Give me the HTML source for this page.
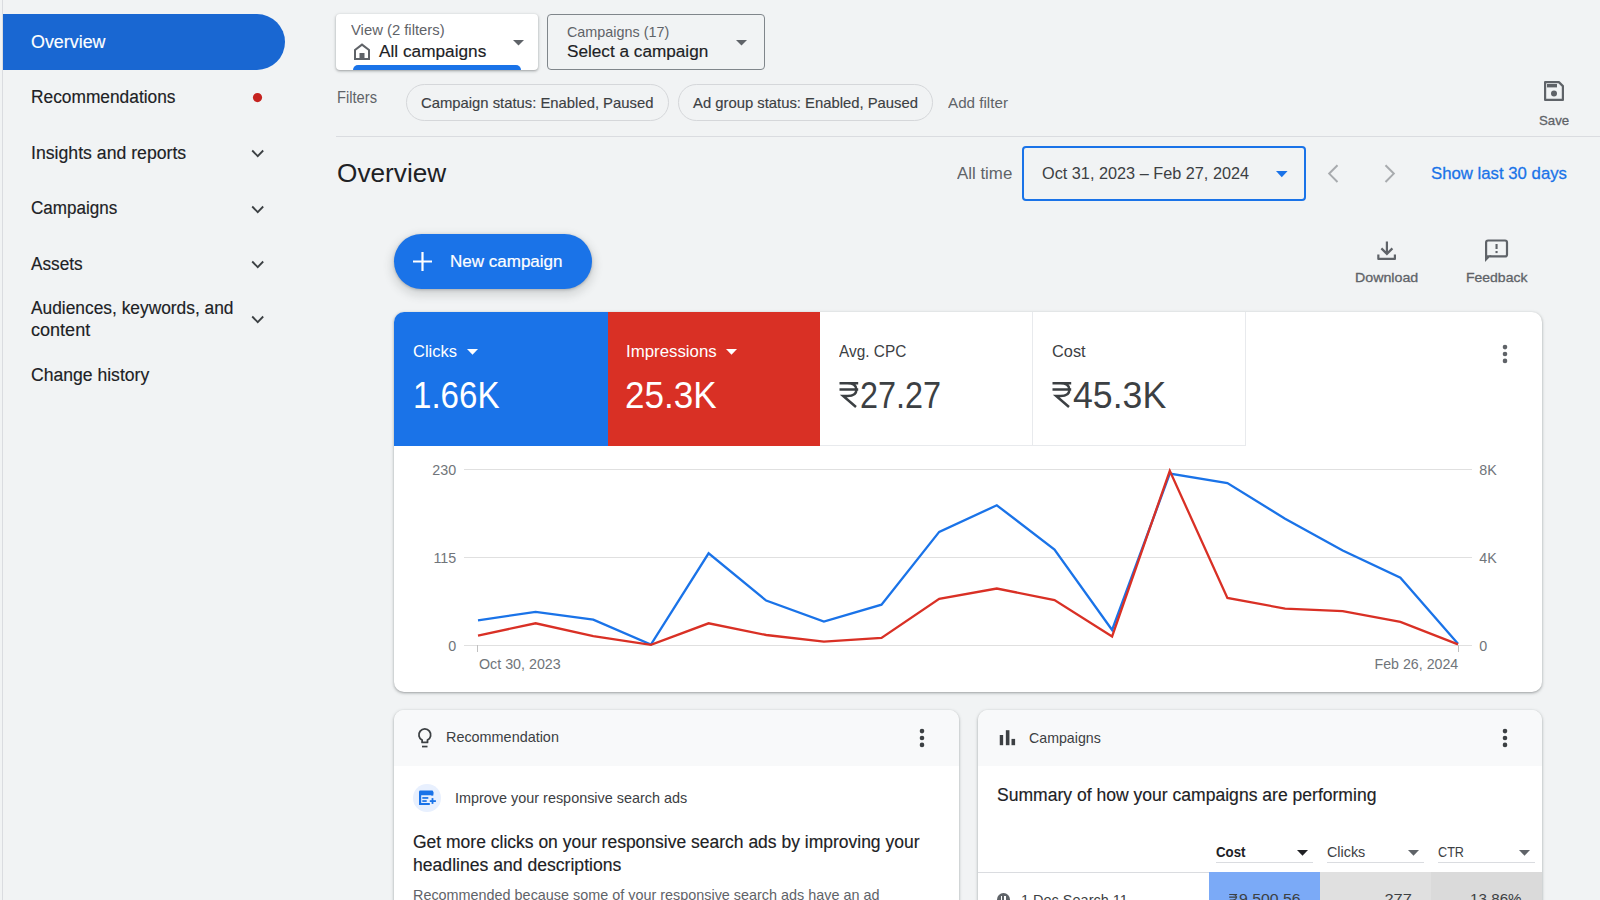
<!DOCTYPE html>
<html><head><meta charset="utf-8"><style>
html,body{margin:0;padding:0;width:1600px;height:900px;overflow:hidden;background:#f1f3f4;font-family:"Liberation Sans",sans-serif;position:relative}
.t{position:absolute;line-height:1;white-space:nowrap}
</style></head><body>
<div style="position:absolute;left:2px;top:0px;width:1px;height:900px;background:#dadce0"></div>
<div style="position:absolute;left:3px;top:14px;width:282px;height:56px;background:#1967d2;border-radius:0 28px 28px 0"></div>
<div class="t" style="left:30.80px;top:34.00px;font-size:17.6px;color:#fff;font-weight:400;-webkit-text-stroke:0.15px currentColor;;transform:scaleX(1.0160);transform-origin:left center;">Overview</div>
<div class="t" style="left:30.80px;top:89.00px;font-size:17.6px;color:#202124;font-weight:400;-webkit-text-stroke:0.15px currentColor;;transform:scaleX(0.9851);transform-origin:left center;">Recommendations</div>
<svg style="position:absolute;left:252px;top:92px;overflow:visible" width="11" height="11" viewBox="0 0 11 11"><circle cx="5.5" cy="5.6" r="4.6" fill="#c5221f"/></svg>
<div class="t" style="left:30.80px;top:145.00px;font-size:17.6px;color:#202124;font-weight:400;-webkit-text-stroke:0.15px currentColor;;transform:scaleX(1.0043);transform-origin:left center;">Insights and reports</div>
<svg style="position:absolute;left:250.7px;top:149.0px;overflow:visible" width="14" height="9" viewBox="0 0 14 9"><path d="M1.2 1.5 L6.7 7.1 L12.2 1.5" fill="none" stroke="#3c4043" stroke-width="1.8"/></svg>
<div class="t" style="left:30.80px;top:200.00px;font-size:17.6px;color:#202124;font-weight:400;-webkit-text-stroke:0.15px currentColor;;transform:scaleX(0.9685);transform-origin:left center;">Campaigns</div>
<svg style="position:absolute;left:250.7px;top:204.6px;overflow:visible" width="14" height="9" viewBox="0 0 14 9"><path d="M1.2 1.5 L6.7 7.1 L12.2 1.5" fill="none" stroke="#3c4043" stroke-width="1.8"/></svg>
<div class="t" style="left:30.80px;top:256.00px;font-size:17.6px;color:#202124;font-weight:400;-webkit-text-stroke:0.15px currentColor;;transform:scaleX(0.9789);transform-origin:left center;">Assets</div>
<svg style="position:absolute;left:250.7px;top:259.9px;overflow:visible" width="14" height="9" viewBox="0 0 14 9"><path d="M1.2 1.5 L6.7 7.1 L12.2 1.5" fill="none" stroke="#3c4043" stroke-width="1.8"/></svg>
<div class="t" style="left:30.80px;top:300.00px;font-size:17.6px;color:#202124;font-weight:400;-webkit-text-stroke:0.15px currentColor;;transform:scaleX(0.9859);transform-origin:left center;">Audiences, keywords, and</div>
<div class="t" style="left:30.80px;top:322.00px;font-size:17.6px;color:#202124;font-weight:400;-webkit-text-stroke:0.15px currentColor;;transform:scaleX(1.0257);transform-origin:left center;">content</div>
<svg style="position:absolute;left:250.7px;top:315.2px;overflow:visible" width="14" height="9" viewBox="0 0 14 9"><path d="M1.2 1.5 L6.7 7.1 L12.2 1.5" fill="none" stroke="#3c4043" stroke-width="1.8"/></svg>
<div class="t" style="left:30.80px;top:367.00px;font-size:17.6px;color:#202124;font-weight:400;-webkit-text-stroke:0.15px currentColor;;transform:scaleX(0.9988);transform-origin:left center;">Change history</div>
<div style="position:absolute;left:336px;top:14px;width:202px;height:56px;background:#fff;border-radius:4px;box-shadow:0 1px 2px rgba(60,64,67,.3),0 1px 3px 1px rgba(60,64,67,.15)"></div>
<div class="t" style="left:350.60px;top:23.00px;font-size:14.2px;color:#5f6368;font-weight:400;;transform:scaleX(1.0444);transform-origin:left center;">View (2 filters)</div>
<svg style="position:absolute;left:353px;top:43px;overflow:visible" width="18" height="17" viewBox="0 0 18 17"><path d="M2 16 V7 L9 1.6 L16 7 V16 Z" fill="none" stroke="#5f6368" stroke-width="2" stroke-linejoin="miter"/><rect x="6.5" y="10" width="5" height="6" fill="#5f6368"/></svg>
<div class="t" style="left:378.80px;top:43.00px;font-size:17.1px;color:#202124;font-weight:400;-webkit-text-stroke:0.15px currentColor;;transform:scaleX(1.0083);transform-origin:left center;">All campaigns</div>
<svg style="position:absolute;left:513px;top:40px;overflow:visible" width="11" height="6" viewBox="0 0 11 6"><path d="M0 0 H11 L5.5 5.6 Z" fill="#5f6368"/></svg>
<div style="position:absolute;left:352.7px;top:65px;width:168.5px;height:5px;background:#1a73e8;border-radius:5px 5px 0 0"></div>
<div style="position:absolute;left:547px;top:14px;width:218px;height:56px;box-sizing:border-box;border:1px solid #80868b;border-radius:4px"></div>
<div class="t" style="left:566.70px;top:25.00px;font-size:14.2px;color:#5f6368;font-weight:400;;transform:scaleX(1.0125);transform-origin:left center;">Campaigns (17)</div>
<div class="t" style="left:566.70px;top:44.00px;font-size:16.8px;color:#202124;font-weight:400;-webkit-text-stroke:0.15px currentColor;;transform:scaleX(1.0234);transform-origin:left center;">Select a campaign</div>
<svg style="position:absolute;left:735.7px;top:40px;overflow:visible" width="11" height="6" viewBox="0 0 11 6"><path d="M0 0 H11 L5.5 5.6 Z" fill="#5f6368"/></svg>
<div class="t" style="left:337.00px;top:90.00px;font-size:15.8px;color:#5f6368;font-weight:400;;transform:scaleX(0.9299);transform-origin:left center;">Filters</div>
<div style="position:absolute;left:406px;top:84px;width:262.6px;height:36.6px;box-sizing:border-box;border:1px solid #d5d7da;border-radius:18.3px"></div>
<div class="t" style="left:420.80px;top:95.00px;font-size:15px;color:#3c4043;font-weight:400;-webkit-text-stroke:0.15px #3c4043;transform:scaleX(0.9883);transform-origin:left center;">Campaign status: Enabled, Paused</div>
<div style="position:absolute;left:678.3px;top:84px;width:255px;height:36.6px;box-sizing:border-box;border:1px solid #d5d7da;border-radius:18.3px"></div>
<div class="t" style="left:693.40px;top:95.00px;font-size:15px;color:#3c4043;font-weight:400;-webkit-text-stroke:0.15px #3c4043;transform:scaleX(0.9883);transform-origin:left center;">Ad group status: Enabled, Paused</div>
<div class="t" style="left:948.00px;top:95.00px;font-size:15.5px;color:#5f6368;font-weight:400;;transform:scaleX(0.9808);transform-origin:left center;">Add filter</div>
<svg style="position:absolute;left:1542px;top:79px;overflow:visible" width="24" height="24" viewBox="0 0 24 24"><path d="M3.1 3.1 H16.9 L20.9 7.1 V20.9 H3.1 Z" fill="none" stroke="#5f6368" stroke-width="2.2" stroke-linejoin="round"/><rect x="5" y="5" width="10" height="3.4" fill="#5f6368"/><circle cx="12" cy="14.5" r="3" fill="#5f6368"/></svg>
<div class="t" style="left:1538.50px;top:114.00px;font-size:13.6px;color:#5f6368;font-weight:400;-webkit-text-stroke:0.3px #5f6368;transform:scaleX(0.9747);transform-origin:left center;">Save</div>
<div style="position:absolute;left:336px;top:135.5px;width:1264px;height:1px;background:#dadce0"></div>
<div class="t" style="left:337.00px;top:160.00px;font-size:26.6px;color:#202124;font-weight:400;;transform:scaleX(0.9852);transform-origin:left center;">Overview</div>
<div class="t" style="left:956.60px;top:166.00px;font-size:16.9px;color:#5f6368;font-weight:400;;transform:scaleX(0.9986);transform-origin:left center;">All time</div>
<div style="position:absolute;left:1022.4px;top:146.4px;width:283.5px;height:54.3px;box-sizing:border-box;border:2px solid #1a73e8;border-radius:4px"></div>
<div class="t" style="left:1041.70px;top:166.00px;font-size:16.6px;color:#3c4043;font-weight:400;;transform:scaleX(0.9803);transform-origin:left center;">Oct 31, 2023 – Feb 27, 2024</div>
<svg style="position:absolute;left:1275.9px;top:170.8px;overflow:visible" width="11.6" height="6.4" viewBox="0 0 11.6 6.4"><path d="M0 0 H11.6 L5.8 6.2 Z" fill="#1a73e8"/></svg>
<svg style="position:absolute;left:1326px;top:164px;overflow:visible" width="14" height="20" viewBox="0 0 14 20"><path d="M11.5 1.2 L3.2 9.6 L11.5 18" fill="none" stroke="#a8abae" stroke-width="2"/></svg>
<svg style="position:absolute;left:1383px;top:164px;overflow:visible" width="14" height="20" viewBox="0 0 14 20"><path d="M2.5 1.2 L10.8 9.6 L2.5 18" fill="none" stroke="#a8abae" stroke-width="2"/></svg>
<div class="t" style="left:1431.00px;top:165.00px;font-size:17.2px;color:#1a73e8;font-weight:400;-webkit-text-stroke:0.3px #1a73e8;transform:scaleX(0.9749);transform-origin:left center;">Show last 30 days</div>
<div style="position:absolute;left:394.4px;top:233.8px;width:197.6px;height:55.4px;background:#1a73e8;border-radius:28px;box-shadow:0 1px 3px rgba(60,64,67,.3),0 4px 8px 3px rgba(60,64,67,.15)"></div>
<svg style="position:absolute;left:413px;top:252px;overflow:visible" width="19" height="19" viewBox="0 0 19 19"><path d="M9.5 0 V19 M0 9.5 H19" stroke="#fff" stroke-width="2.2"/></svg>
<div class="t" style="left:449.80px;top:254.00px;font-size:16.8px;color:#fff;font-weight:400;-webkit-text-stroke:0.2px #fff;transform:scaleX(1.0135);transform-origin:left center;">New campaign</div>
<svg style="position:absolute;left:1375px;top:240px;overflow:visible" width="24" height="22" viewBox="0 0 24 22"><path d="M11.9 1.5 V13.5 M6.4 8.4 L11.9 13.9 L17.4 8.4" fill="none" stroke="#5f6368" stroke-width="2.2"/><path d="M3.35 14.4 V18.9 H19.9 V14.4" fill="none" stroke="#5f6368" stroke-width="2.2" stroke-linejoin="round"/></svg>
<div class="t" style="left:1354.80px;top:271.00px;font-size:13.3px;color:#5f6368;font-weight:400;-webkit-text-stroke:0.3px #5f6368;transform:scaleX(1.0686);transform-origin:left center;">Download</div>
<svg style="position:absolute;left:1484px;top:238px;overflow:visible" width="26" height="26" viewBox="0 0 26 26"><path d="M2.1 18.4 V4.5 Q2.1 2.5 4.1 2.5 H21 Q23 2.5 23 4.5 V16.4 Q23 18.4 21 18.4 H5.5" fill="none" stroke="#5f6368" stroke-width="2.2" stroke-linejoin="round"/><path d="M1 17.3 H7.5 L1 23.9 Z" fill="#5f6368"/><rect x="11.5" y="6" width="2.1" height="5" fill="#5f6368"/><rect x="11.5" y="13" width="2.1" height="2.1" fill="#5f6368"/></svg>
<div class="t" style="left:1465.60px;top:271.00px;font-size:13.3px;color:#5f6368;font-weight:400;-webkit-text-stroke:0.3px #5f6368;transform:scaleX(1.0513);transform-origin:left center;">Feedback</div>
<div style="position:absolute;left:394.3px;top:312px;width:1147.7px;height:379.6px;background:#fff;border-radius:10px;box-shadow:0 1px 2px rgba(60,64,67,.3),0 1px 3px 1px rgba(60,64,67,.15)"></div>
<div style="position:absolute;left:394.3px;top:312px;width:213.4px;height:133.8px;background:#1a73e8;border-radius:10px 0 0 0"></div>
<div style="position:absolute;left:607.5px;top:312px;width:212.5px;height:133.8px;background:#d93025"></div>
<div style="position:absolute;left:820px;top:445px;width:425.5px;height:1px;background:#e8eaed"></div>
<div style="position:absolute;left:1032px;top:312px;width:1px;height:134px;background:#e8eaed"></div>
<div style="position:absolute;left:1245px;top:312px;width:1px;height:134px;background:#e8eaed"></div>
<div class="t" style="left:413.40px;top:343.00px;font-size:17px;color:#fff;font-weight:400;;transform:scaleX(0.9704);transform-origin:left center;">Clicks</div>
<svg style="position:absolute;left:466.5px;top:349px;overflow:visible" width="11" height="6" viewBox="0 0 11 6"><path d="M0 0 H11 L5.5 5.8 Z" fill="#fff"/></svg>
<div class="t" style="left:626.00px;top:343.00px;font-size:17px;color:#fff;font-weight:400;;transform:scaleX(0.9897);transform-origin:left center;">Impressions</div>
<svg style="position:absolute;left:725.5px;top:349px;overflow:visible" width="11" height="6" viewBox="0 0 11 6"><path d="M0 0 H11 L5.5 5.8 Z" fill="#fff"/></svg>
<div class="t" style="left:838.70px;top:343.00px;font-size:16.2px;color:#3c4043;font-weight:400;;transform:scaleX(0.9508);transform-origin:left center;">Avg. CPC</div>
<div class="t" style="left:1051.80px;top:343.00px;font-size:16.2px;color:#3c4043;font-weight:400;;transform:scaleX(1.0091);transform-origin:left center;">Cost</div>
<div class="t" style="left:412.60px;top:377.00px;font-size:37px;color:#fff;font-weight:400;;transform:scaleX(0.8945);transform-origin:left center;">1.66K</div>
<div class="t" style="left:625.20px;top:377.00px;font-size:37px;color:#fff;font-weight:400;;transform:scaleX(0.9462);transform-origin:left center;">25.3K</div>
<svg style="position:absolute;left:839.3px;top:382.0px;overflow:visible" width="20.0" height="25.6" viewBox="0 0 20 25.6"><path d="M0.5 1.3 H19.2 M0.5 7.4 H19.2 M8.5 1.3 Q17.4 1.3 17.4 7.7 Q17.4 14 8.5 14 H4.2 L17 25" fill="none" stroke="#3c4043" stroke-width="2.5"/></svg>
<div class="t" style="left:860.20px;top:377.00px;font-size:37px;color:#3c4043;font-weight:400;;transform:scaleX(0.8748);transform-origin:left center;">27.27</div>
<svg style="position:absolute;left:1051.8px;top:382.0px;overflow:visible" width="20.0" height="25.6" viewBox="0 0 20 25.6"><path d="M0.5 1.3 H19.2 M0.5 7.4 H19.2 M8.5 1.3 Q17.4 1.3 17.4 7.7 Q17.4 14 8.5 14 H4.2 L17 25" fill="none" stroke="#3c4043" stroke-width="2.5"/></svg>
<div class="t" style="left:1073.00px;top:377.00px;font-size:37px;color:#3c4043;font-weight:400;;transform:scaleX(0.9638);transform-origin:left center;">45.3K</div>
<svg style="position:absolute;left:1499.75px;top:341.85px;overflow:visible" width="10" height="24" viewBox="0 0 10 24"><circle cx="5" cy="5.1" r="2.3" fill="#5f6368"/><circle cx="5" cy="12" r="2.3" fill="#5f6368"/><circle cx="5" cy="18.9" r="2.3" fill="#5f6368"/></svg>
<div style="position:absolute;left:464px;top:468.5px;width:1008px;height:1px;background:#e0e0e0"></div>
<div style="position:absolute;left:464px;top:556.5px;width:1008px;height:1px;background:#e0e0e0"></div>
<div style="position:absolute;left:464px;top:644.5px;width:1008px;height:1px;background:#e0e0e0"></div>
<div class="t" style="right:1143.80px;top:463.00px;font-size:14.3px;color:#70757a;font-weight:400;;">230</div>
<div class="t" style="right:1143.80px;top:551.00px;font-size:14.3px;color:#70757a;font-weight:400;;">115</div>
<div class="t" style="right:1143.80px;top:639.00px;font-size:14.3px;color:#70757a;font-weight:400;;">0</div>
<div class="t" style="left:1479.20px;top:463.00px;font-size:14.3px;color:#70757a;font-weight:400;;">8K</div>
<div class="t" style="left:1479.20px;top:551.00px;font-size:14.3px;color:#70757a;font-weight:400;;">4K</div>
<div class="t" style="left:1479.20px;top:639.00px;font-size:14.3px;color:#70757a;font-weight:400;;">0</div>
<div style="position:absolute;left:477.2px;top:645px;width:1px;height:6.5px;background:#c0c0c0"></div>
<div style="position:absolute;left:1458px;top:645px;width:1px;height:6.5px;background:#c0c0c0"></div>
<div class="t" style="left:478.50px;top:657.00px;font-size:14.3px;color:#70757a;font-weight:400;;transform:scaleX(0.9979);transform-origin:left center;">Oct 30, 2023</div>
<div class="t" style="right:142.00px;top:657.00px;font-size:14.3px;color:#70757a;font-weight:400;;transform:scaleX(0.9945);transform-origin:right center;">Feb 26, 2024</div>
<svg style="position:absolute;left:0px;top:0px;overflow:visible" width="1600" height="900" viewBox="0 0 1600 900"><polyline points="478.0,620.4 535.6,611.8 593.3,619.6 650.9,644.5 708.6,553.3 766.2,600.6 823.9,621.6 881.5,604.7 939.2,531.9 996.8,505.3 1054.5,549.5 1112.1,630.0 1169.8,473.6 1227.4,483.1 1285.1,518.7 1342.7,550.5 1400.4,577.8 1458.0,643.8" fill="none" stroke="#1a73e8" stroke-width="2.3" stroke-linejoin="miter"/><polyline points="478.0,635.6 535.6,623.3 593.3,636.1 650.9,644.9 708.6,623.3 766.2,635.0 823.9,641.6 881.5,637.9 939.2,598.9 996.8,588.5 1054.5,600.0 1112.1,636.5 1169.8,470.8 1227.4,597.9 1285.1,608.6 1342.7,611.1 1400.4,621.9 1458.0,644.4" fill="none" stroke="#d93025" stroke-width="2.3" stroke-linejoin="miter"/></svg>
<div style="position:absolute;left:394.3px;top:709.8px;width:564.6px;height:260px;background:#fff;border-radius:10px;overflow:hidden;box-shadow:0 1px 2px rgba(60,64,67,.3),0 1px 3px 1px rgba(60,64,67,.15)"></div>
<div style="position:absolute;left:394.3px;top:709.8px;width:564.6px;height:56px;background:#f8f9fa;border-radius:10px 10px 0 0"></div>
<div style="position:absolute;left:977.8px;top:709.8px;width:564.2px;height:260px;background:#fff;border-radius:10px;overflow:hidden;box-shadow:0 1px 2px rgba(60,64,67,.3),0 1px 3px 1px rgba(60,64,67,.15)"></div>
<div style="position:absolute;left:977.8px;top:709.8px;width:564.2px;height:56px;background:#f8f9fa;border-radius:10px 10px 0 0"></div>
<svg style="position:absolute;left:410px;top:722px;overflow:visible" width="30" height="30" viewBox="0 0 30 30"><path d="M12.1 18.1 A5.9 5.9 0 1 1 17.5 18.1 V20.4 H12.1 Z" fill="none" stroke="#3c4043" stroke-width="1.8" stroke-linejoin="round"/><rect x="12" y="23.7" width="5.5" height="1.7" fill="#3c4043"/></svg>
<div class="t" style="left:446.00px;top:730.00px;font-size:14.4px;color:#3c4043;font-weight:400;;transform:scaleX(1.0009);transform-origin:left center;">Recommendation</div>
<svg style="position:absolute;left:917px;top:725.8px;overflow:visible" width="10" height="24" viewBox="0 0 10 24"><circle cx="5" cy="5.1" r="2.3" fill="#3c4043"/><circle cx="5" cy="12" r="2.3" fill="#3c4043"/><circle cx="5" cy="18.9" r="2.3" fill="#3c4043"/></svg>
<div style="position:absolute;left:413.2px;top:784.3px;width:27.6px;height:27.6px;background:#e8f0fe;border-radius:50%"></div>
<svg style="position:absolute;left:413px;top:783px;overflow:visible" width="30" height="30" viewBox="0 0 30 30"><rect x="6" y="7.5" width="14.3" height="4.8" rx="1.4" fill="#1a73e8"/><rect x="6" y="9" width="2.2" height="13" fill="#1a73e8"/><path d="M6 19.9 H16.8 V21.9 H8 Q6 21.9 6 19.9 Z" fill="#1a73e8"/><rect x="18.3" y="9" width="2" height="3.6" fill="#1a73e8"/><rect x="9.3" y="14.1" width="6" height="1.7" fill="#1a73e8"/><rect x="9.3" y="17.2" width="4.4" height="1.7" fill="#1a73e8"/><rect x="16.8" y="17.2" width="6.1" height="1.8" fill="#1a73e8"/><rect x="18.6" y="15.1" width="1.8" height="5.8" fill="#1a73e8"/></svg>
<div class="t" style="left:454.90px;top:791.00px;font-size:14.6px;color:#3c4043;font-weight:400;;transform:scaleX(0.9875);transform-origin:left center;">Improve your responsive search ads</div>
<div class="t" style="left:413.30px;top:834.00px;font-size:17.5px;color:#202124;font-weight:400;-webkit-text-stroke:0.15px currentColor;;transform:scaleX(0.9995);transform-origin:left center;">Get more clicks on your responsive search ads by improving your</div>
<div class="t" style="left:413.30px;top:857.00px;font-size:17.5px;color:#202124;font-weight:400;-webkit-text-stroke:0.15px currentColor;;transform:scaleX(1.0051);transform-origin:left center;">headlines and descriptions</div>
<div class="t" style="left:413.00px;top:888.00px;font-size:14.6px;color:#5f6368;font-weight:400;;transform:scaleX(0.9864);transform-origin:left center;">Recommended because some of your responsive search ads have an ad</div>
<svg style="position:absolute;left:999px;top:730px;overflow:visible" width="17" height="16" viewBox="0 0 17 16"><rect x="0.75" y="5" width="3.4" height="10.2" fill="#3c4043"/><rect x="6.85" y="0.2" width="3.6" height="15" fill="#3c4043"/><rect x="12.5" y="8.9" width="3.6" height="6.3" fill="#3c4043"/></svg>
<div class="t" style="left:1028.80px;top:731.00px;font-size:14.4px;color:#3c4043;font-weight:400;;transform:scaleX(0.9863);transform-origin:left center;">Campaigns</div>
<svg style="position:absolute;left:1499.8px;top:725.8px;overflow:visible" width="10" height="24" viewBox="0 0 10 24"><circle cx="5" cy="5.1" r="2.3" fill="#3c4043"/><circle cx="5" cy="12" r="2.3" fill="#3c4043"/><circle cx="5" cy="18.9" r="2.3" fill="#3c4043"/></svg>
<div class="t" style="left:996.60px;top:787.00px;font-size:17.5px;color:#202124;font-weight:400;-webkit-text-stroke:0.15px currentColor;;transform:scaleX(1.0028);transform-origin:left center;">Summary of how your campaigns are performing</div>
<div class="t" style="left:1215.80px;top:845.00px;font-size:14.2px;color:#202124;font-weight:700;;transform:scaleX(0.9356);transform-origin:left center;">Cost</div>
<svg style="position:absolute;left:1297px;top:850px;overflow:visible" width="11" height="6" viewBox="0 0 11 6"><path d="M0 0 H11 L5.5 5.8 Z" fill="#202124"/></svg>
<div style="position:absolute;left:1215.8px;top:861.5px;width:97px;height:1.3px;background:#dadce0"></div>
<div class="t" style="left:1326.90px;top:845.00px;font-size:14.4px;color:#3c4043;font-weight:400;;transform:scaleX(0.9980);transform-origin:left center;">Clicks</div>
<svg style="position:absolute;left:1407.8px;top:850px;overflow:visible" width="11" height="6" viewBox="0 0 11 6"><path d="M0 0 H11 L5.5 5.8 Z" fill="#5f6368"/></svg>
<div style="position:absolute;left:1326.9px;top:861.5px;width:96.7px;height:1.3px;background:#dadce0"></div>
<div class="t" style="left:1437.80px;top:845.00px;font-size:14.4px;color:#3c4043;font-weight:400;;transform:scaleX(0.8790);transform-origin:left center;">CTR</div>
<svg style="position:absolute;left:1519px;top:850px;overflow:visible" width="11" height="6" viewBox="0 0 11 6"><path d="M0 0 H11 L5.5 5.8 Z" fill="#5f6368"/></svg>
<div style="position:absolute;left:1437.8px;top:861.5px;width:97px;height:1.3px;background:#dadce0"></div>
<div style="position:absolute;left:977.8px;top:871.8px;width:231px;height:1.2px;background:#dadce0"></div>
<div style="position:absolute;left:1208.7px;top:872px;width:111.3px;height:28px;background:#7baaf7"></div>
<div style="position:absolute;left:1320px;top:872px;width:111px;height:28px;background:#e0e0e0"></div>
<div style="position:absolute;left:1431px;top:872px;width:111px;height:28px;background:#dadada"></div>
<div style="position:absolute;left:996.7px;top:892.6px;width:13px;height:13px;background:#5f6368;border-radius:50%"></div>
<div style="position:absolute;left:1000.8px;top:895.6px;width:1.6px;height:7px;background:#fff"></div>
<div style="position:absolute;left:1004.2px;top:895.6px;width:1.6px;height:7px;background:#fff"></div>
<div class="t" style="left:1021.00px;top:893.00px;font-size:14.4px;color:#3c4043;font-weight:400;;transform:scaleX(1.0064);transform-origin:left center;">1 Dec Search 11</div>
<svg style="position:absolute;left:1229.4px;top:893.6px;overflow:visible" width="8.4375" height="10.8" viewBox="0 0 20 25.6"><path d="M0.5 1.3 H19.2 M0.5 7.4 H19.2 M8.5 1.3 Q17.4 1.3 17.4 7.7 Q17.4 14 8.5 14 H4.2 L17 25" fill="none" stroke="#3c4043" stroke-width="2.5"/></svg>
<div class="t" style="left:1239.00px;top:891.00px;font-size:15.5px;color:#3c4043;font-weight:400;;transform:scaleX(1.0192);transform-origin:left center;">9,500.56</div>
<div class="t" style="right:187.70px;top:891.00px;font-size:15.5px;color:#3c4043;font-weight:400;;transform:scaleX(1.0628);transform-origin:right center;">277</div>
<div class="t" style="right:78.50px;top:891.00px;font-size:15.5px;color:#3c4043;font-weight:400;;transform:scaleX(0.9795);transform-origin:right center;">13.86%</div>
</body></html>
